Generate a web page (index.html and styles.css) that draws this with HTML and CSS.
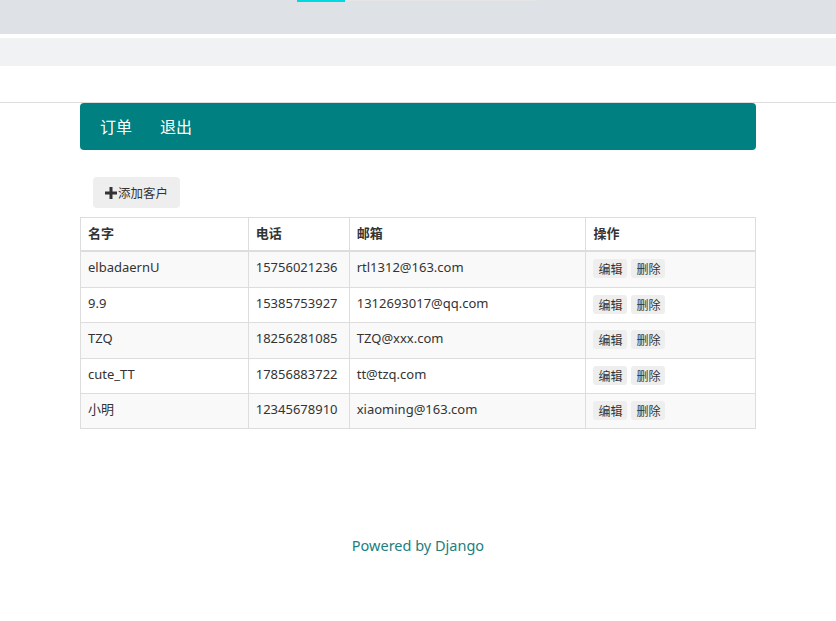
FILE: index.html
```html
<!DOCTYPE html>
<html lang="zh">
<head>
<meta charset="utf-8">
<title>客户列表</title>
<link rel="stylesheet" href="styles.css">
</head>
<body>
<div class="tabbar"><span class="tab-active"></span><span class="tab-rest"></span></div>
<div class="toolbar"></div>
<div class="header-space"></div>
<div class="container">
  <nav class="navbar">
    <a class="nav-link" href="#">订单</a>
    <a class="nav-link" href="#">退出</a>
  </nav>
  <div class="actions">
    <a class="btn" href="#"><svg class="plus" viewBox="0 0 12 12" width="12" height="12"><path d="M4.5 0h3v4.5H12v3H7.5V12h-3V7.5H0v-3h4.5z" fill="#333"/></svg>添加客户</a>
  </div>
  <table class="table">
    <thead>
      <tr><th class="c1">名字</th><th class="c2">电话</th><th class="c3">邮箱</th><th class="c4">操作</th></tr>
    </thead>
    <tbody>
      <tr><td>elbadaernU</td><td>15756021236</td><td>rtl1312@163.com</td><td><span class="btn-xs">编辑</span><span class="btn-xs">删除</span></td></tr>
      <tr><td>9.9</td><td>15385753927</td><td>1312693017@qq.com</td><td><span class="btn-xs">编辑</span><span class="btn-xs">删除</span></td></tr>
      <tr><td>TZQ</td><td>18256281085</td><td>TZQ@xxx.com</td><td><span class="btn-xs">编辑</span><span class="btn-xs">删除</span></td></tr>
      <tr><td>cute_TT</td><td>17856883722</td><td>tt@tzq.com</td><td><span class="btn-xs">编辑</span><span class="btn-xs">删除</span></td></tr>
      <tr><td>小明</td><td>12345678910</td><td>xiaoming@163.com</td><td><span class="btn-xs">编辑</span><span class="btn-xs">删除</span></td></tr>
    </tbody>
  </table>
</div>
<footer class="footer">Powered by Django</footer>
</body>
</html>
```
FILE: styles.css
```css
* { box-sizing: border-box; }
body {
  margin: 0;
  font-family: "Noto Sans", "Noto Sans CJK SC", sans-serif;
  font-size: 13px;
  color: #333;
  background: #fff;
}
.tabbar {
  height: 34px;
  background: #dee1e6;
  display: flex;
  align-items: flex-start;
  padding-left: 297px;
}
.tab-active { width: 48px; height: 2px; background: #00d8e0; }
.tab-rest { width: 192px; height: 1px; background: #e6e6e6; }
.toolbar {
  height: 28px;
  margin-top: 4px;
  background: #f1f2f4;
}
.header-space {
  height: 37px;
  border-bottom: 1px solid #ddd;
}
.container {
  width: 676px;
  margin: 0 auto;
}
.navbar {
  height: 47px;
  background: #008080;
  border-radius: 4px;
  display: flex;
  align-items: center;
  padding-left: 20px;
  padding-bottom: 1px;
  gap: 28px;
}
.nav-link {
  color: #fff;
  text-decoration: none;
  font-size: 16px;
  font-family: "Noto Sans CJK SC", sans-serif;
}
.actions {
  padding: 27px 0 9px 13px;
  display: flex;
}
.btn {
  display: inline-flex;
  align-items: center;
  height: 31px;
  padding: 0 12px 0 12px;
  background: #eee;
  border-radius: 4px;
  color: #333;
  text-decoration: none;
  font-size: 12.5px;
  font-family: "Noto Sans CJK SC", sans-serif;
}
.plus { margin-right: 1px; }
.table {
  width: 676px;
  border-collapse: collapse;
  border: 1px solid #ddd;
}
.table th, .table td {
  border: 1px solid #ddd;
  padding: 6px 7px 10px 7px;
  text-align: left;
  vertical-align: top;
  line-height: 18.4px;
}
.table th {
  font-weight: bold;
  font-family: "Noto Sans CJK SC", sans-serif;
  font-size: 13px;
  border-bottom: 2px solid #ddd;
  padding-top: 6px;
  padding-bottom: 8px;
}
.c1 { width: 168px; }
.c2 { width: 101px; }
.c3 { width: 237px; }
.c4 { width: 170px; }
.table tbody tr:nth-child(odd) { background: #f9f9f9; }
.btn-xs {
  display: inline-block;
  vertical-align: top;
  background: #eee;
  border-radius: 3px;
  font-size: 12px;
  font-family: "Noto Sans CJK SC", sans-serif;
  line-height: 19px;
  padding: 0 5px;
  margin: 1px 4px -2px 0;
  color: #333;
}
.footer {
  text-align: center;
  color: #1a8080;
  font-size: 14.5px;
  margin-top: 106px;
}
```
